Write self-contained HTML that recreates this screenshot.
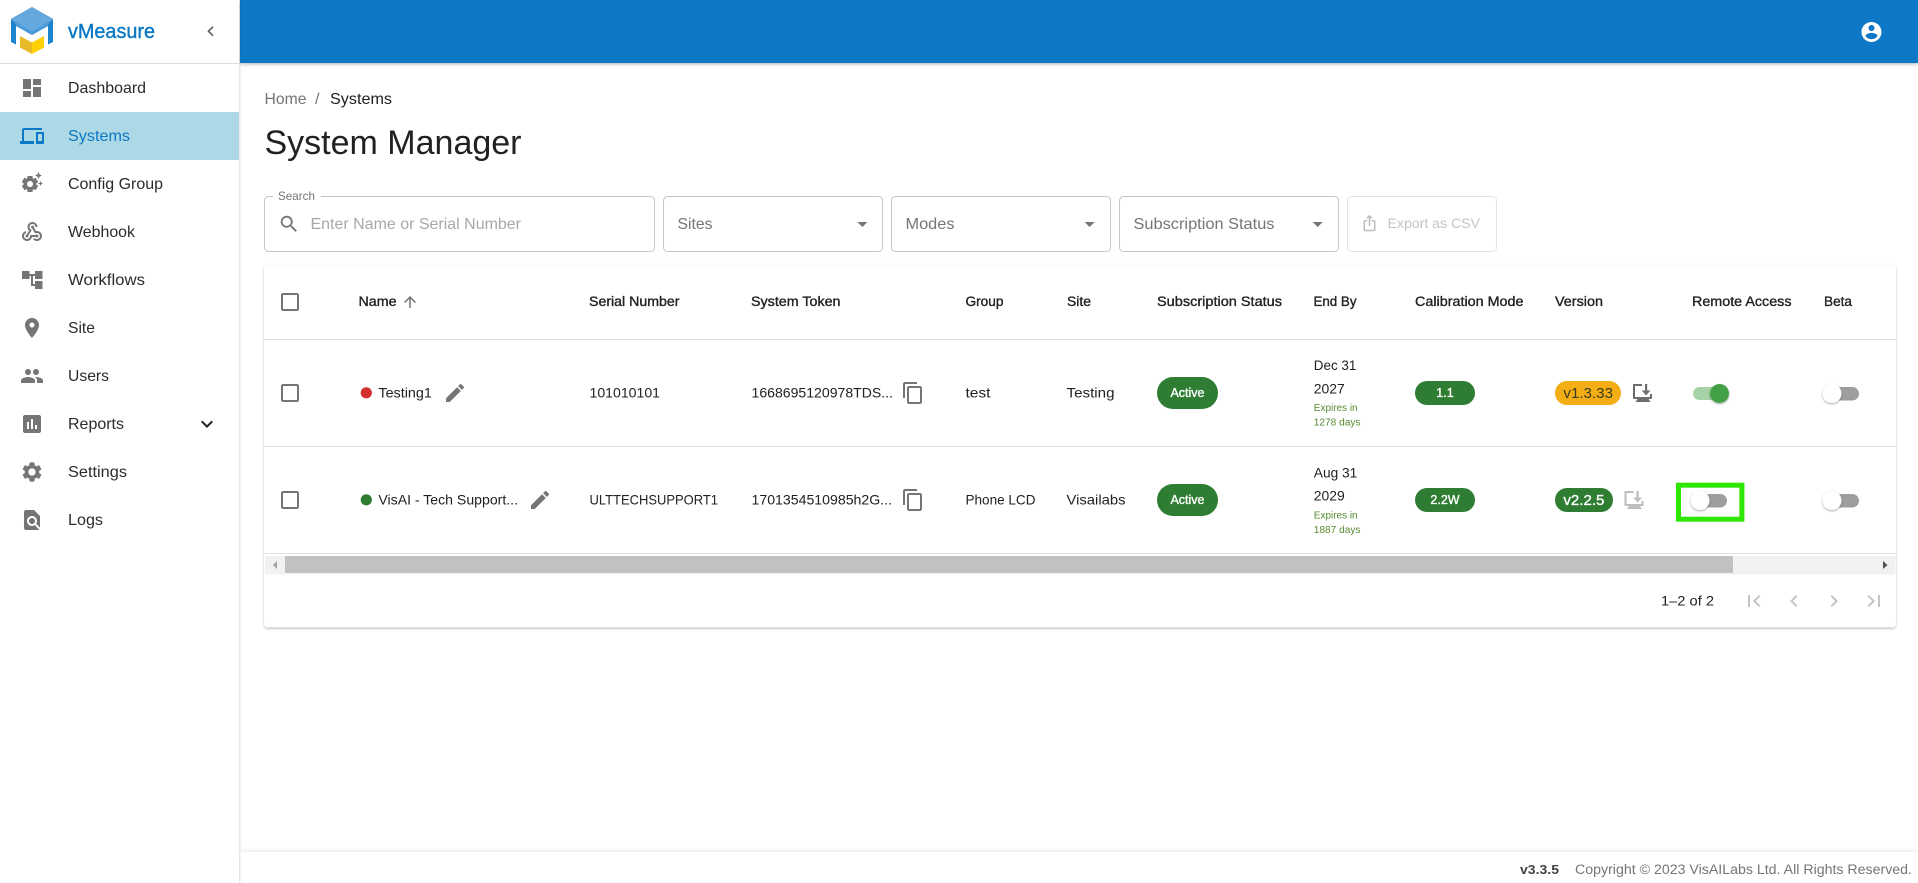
<!DOCTYPE html>
<html lang="en">
<head>
<meta charset="utf-8">
<title>vMeasure - System Manager</title>
<style>
html,body{margin:0;padding:0;background:#fff;width:1918px;height:883px;overflow:hidden}
svg{display:block}
text{font-family:"Liberation Sans",Arial,sans-serif;fill:#212121;font-size:14px}
.nav{font-size:16px;fill:#2b2b2b}
.hd{font-size:13.5px;fill:#222;stroke:#222;stroke-width:.35px}
.ph{font-size:16px;fill:#757575}
.ic{fill:#757575}
.sm{font-size:10px;fill:#558b2f}
.chip{font-size:12.5px;fill:#fff;stroke:#fff;stroke-width:.35px;text-anchor:middle}
.pg{fill:#c4c4c4}
</style>
</head>
<body>
<svg width="1918" height="883" viewBox="0 0 1918 883" xmlns="http://www.w3.org/2000/svg">
<defs>
<filter id="sc" x="-5%" y="-5%" width="110%" height="115%"><feDropShadow dx="0" dy="1.2" stdDeviation="1" flood-color="#000" flood-opacity=".28"/></filter>
<filter id="sh" x="-20%" y="-20%" width="140%" height="160%"><feDropShadow dx="0" dy="1" stdDeviation="1" flood-color="#000" flood-opacity=".35"/></filter>
<filter id="hs" x="-2%" y="-10%" width="104%" height="130%"><feDropShadow dx="0" dy="1.5" stdDeviation="1.5" flood-color="#000" flood-opacity=".25"/></filter>
<filter id="ss" x="-5%" y="-2%" width="120%" height="104%"><feDropShadow dx="1" dy="0" stdDeviation="1" flood-color="#000" flood-opacity=".12"/></filter>
<filter id="fs" x="-2%" y="-40%" width="104%" height="150%"><feDropShadow dx="0" dy="-2" stdDeviation="2" flood-color="#000" flood-opacity=".07"/></filter>
</defs>

<!-- footer -->
<rect x="240" y="852" width="1678" height="31" fill="#fff" filter="url(#fs)"/>
<text x="1520" y="874" textLength="39" lengthAdjust="spacingAndGlyphs" style="font-weight:700;font-size:13px;fill:#424242">v3.3.5</text>
<text x="1575" y="874" textLength="337" lengthAdjust="spacingAndGlyphs" style="font-size:13.5px;fill:#757575">Copyright © 2023 VisAILabs Ltd. All Rights Reserved.</text>

<!-- header -->
<rect x="240" y="0" width="1678" height="63" fill="#0878c5" filter="url(#hs)"/>
<path transform="translate(1859.5,20)" fill="#fff" d="M12 2C6.48 2 2 6.48 2 12s4.48 10 10 10 10-4.48 10-10S17.52 2 12 2zm0 3c1.66 0 3 1.34 3 3s-1.34 3-3 3-3-1.34-3-3 1.34-3 3-3zm0 14.2c-2.5 0-4.71-1.28-6-3.22.03-1.99 4-3.08 6-3.08 1.99 0 5.97 1.09 6 3.08-1.29 1.94-3.5 3.22-6 3.22z"/>

<!-- sidebar -->
<rect x="0" y="0" width="239" height="883" fill="#fff" filter="url(#ss)"/>
<rect x="0" y="63" width="239" height="1" fill="#dedede"/>
<rect x="0" y="112" width="239" height="48" fill="#add8e6"/>
<!-- logo -->
<path d="M11 19 L32 7 L53 19 L53 42 L48 44.5 L48 26 L32 35 L16 26 L16 44.5 L11 42 Z" fill="#1e84cf"/>
<path d="M11 19.5 L32 7 L53 19.5 L32 32 Z" fill="#63a8df"/>
<path d="M14 21.5 L32 32 L50 21.5 L48 26 L32 35 L16 26 Z" fill="#4f9ad8"/>
<path d="M20 36 L32 42.5 L32 54 L20 47.5 Z" fill="#e8ba28"/>
<path d="M44 36 L32 42.5 L32 54 L44 47.5 Z" fill="#ffd005"/>
<text x="68" y="38" textLength="87" lengthAdjust="spacingAndGlyphs" style="font-size:20px;fill:#0a78c4;stroke:#0a78c4;stroke-width:.4px">vMeasure</text>
<path transform="translate(200.5,21) scale(.85)" fill="#616161" d="M15.41 7.41L14 6l-6 6 6 6 1.41-1.41L10.83 12z"/>

<path class="ic" transform="translate(20,76)" d="M3 13h8V3H3v10zm0 8h8v-6H3v6zm10 0h8V11h-8v10zm0-18v6h8V3h-8z"/>
<text class="nav" x="68" y="93" textLength="78" lengthAdjust="spacingAndGlyphs">Dashboard</text>
<path fill="#0a78c4" transform="translate(20,124)" d="M4 6h18V4H4c-1.1 0-2 .9-2 2v11H0v3h14v-3H4V6zm19 2h-6c-.55 0-1 .45-1 1v10c0 .55.45 1 1 1h6c.55 0 1-.45 1-1V9c0-.55-.45-1-1-1zm-1 9h-4v-7h4v7z"/>
<text class="nav" x="68" y="141" textLength="62" lengthAdjust="spacingAndGlyphs" style="fill:#0a78c4">Systems</text>
<path class="ic" transform="translate(20,170)" d="M17.41 6.59 15 5.5l2.41-1.09L18.5 2l1.09 2.41L22 5.5l-2.41 1.09L18.5 9l-1.09-2.41zm3.87 6.13L20.5 11l-.78 1.72-1.72.78 1.72.78.78 1.72.78-1.72L23 13.5l-1.72-.78zm-5.04 1.65 1.94 1.47-2.5 4.33-2.24-.94c-.2.13-.42.26-.64.37l-.3 2.4h-5l-.3-2.41c-.22-.11-.43-.23-.64-.37l-2.24.94-2.5-4.33 1.94-1.47c-.01-.11-.01-.24-.01-.37s0-.26.01-.38l-1.94-1.47 2.5-4.33 2.24.94c.2-.13.42-.26.64-.37L7.5 6h5l.3 2.41c.22.11.43.23.64.37l2.24-.94 2.5 4.33-1.94 1.47c.01.12.01.25.01.37s0 .24-.01.36zM13 14c0-1.66-1.34-3-3-3s-3 1.34-3 3 1.34 3 3 3 3-1.34 3-3z"/>
<text class="nav" x="68" y="189" textLength="95" lengthAdjust="spacingAndGlyphs">Config Group</text>
<path class="ic" transform="translate(20,220)" d="M10 15h5.88c.27-.31.67-.5 1.12-.5.83 0 1.5.67 1.5 1.5s-.67 1.5-1.5 1.5c-.44 0-.84-.19-1.12-.5H11.9c-.46 2.28-2.48 4-4.9 4-2.76 0-5-2.24-5-5 0-2.42 1.72-4.44 4-4.9v2.07c-1.16.41-2 1.53-2 2.83 0 1.65 1.35 3 3 3s3-1.35 3-3v-1zm2.5-11c1.65 0 3 1.35 3 3h2c0-2.76-2.24-5-5-5s-5 2.24-5 5c0 1.43.6 2.71 1.55 3.62l-2.35 3.9c-.68.14-1.2.75-1.2 1.48 0 .83.67 1.5 1.5 1.5s1.5-.67 1.5-1.5c0-.16-.02-.31-.07-.45l3.38-5.63C10.49 9.61 9.5 8.42 9.5 7c0-1.65 1.35-3 3-3zm4.5 9c-.64 0-1.23.2-1.72.54l-3.05-5.07C11.53 8.35 11 7.74 11 7c0-.83.67-1.5 1.5-1.5S14 6.17 14 7c0 .15-.02.29-.06.43l2.19 3.65c.28-.05.57-.08.87-.08 2.76 0 5 2.24 5 5s-2.24 5-5 5c-1.85 0-3.47-1.01-4.33-2.5h2.67c.48.32 1.05.5 1.66.5 1.65 0 3-1.35 3-3s-1.35-3-3-3z"/>
<text class="nav" x="68" y="237" textLength="67" lengthAdjust="spacingAndGlyphs">Webhook</text>
<g class="ic">
<rect x="22" y="271" width="7.5" height="8"/>
<rect x="35" y="271" width="7.5" height="8"/>
<rect x="35" y="281" width="7.5" height="8"/>
<rect x="29" y="274" width="6" height="2"/>
<rect x="31" y="275" width="2" height="11"/>
<rect x="31" y="284" width="4" height="2"/>
</g>
<text class="nav" x="68" y="285" textLength="77" lengthAdjust="spacingAndGlyphs">Workflows</text>
<path class="ic" transform="translate(20,316)" d="M12 2C8.13 2 5 5.13 5 9c0 5.25 7 13 7 13s7-7.75 7-13c0-3.87-3.13-7-7-7zm0 9.5c-1.38 0-2.5-1.12-2.5-2.5s1.12-2.5 2.5-2.5 2.5 1.12 2.5 2.5-1.12 2.5-2.5 2.5z"/>
<text class="nav" x="68" y="333" textLength="27" lengthAdjust="spacingAndGlyphs">Site</text>
<path class="ic" transform="translate(20,364)" d="M16 11c1.66 0 2.99-1.34 2.99-3S17.66 5 16 5c-1.66 0-3 1.34-3 3s1.34 3 3 3zm-8 0c1.66 0 2.99-1.34 2.99-3S9.66 5 8 5C6.34 5 5 6.34 5 8s1.34 3 3 3zm0 2c-2.33 0-7 1.17-7 3.5V19h14v-2.5c0-2.33-4.67-3.5-7-3.5zm8 0c-.29 0-.62.02-.97.05 1.16.84 1.97 1.97 1.97 3.45V19h6v-2.5c0-2.33-4.67-3.5-7-3.5z"/>
<text class="nav" x="68" y="381" textLength="41" lengthAdjust="spacingAndGlyphs">Users</text>
<path class="ic" transform="translate(20,412)" d="M19 3H5c-1.1 0-2 .9-2 2v14c0 1.1.9 2 2 2h14c1.1 0 2-.9 2-2V5c0-1.1-.9-2-2-2zM9 17H7v-7h2v7zm4 0h-2V7h2v10zm4 0h-2v-4h2v4z"/>
<text class="nav" x="68" y="429" textLength="56" lengthAdjust="spacingAndGlyphs">Reports</text>
<path fill="#222" transform="translate(195,412)" d="M16.59 8.59L12 13.17 7.41 8.59 6 10l6 6 6-6z"/>
<path class="ic" transform="translate(20,460)" d="M19.14 12.94c.04-.3.06-.61.06-.94 0-.32-.02-.64-.07-.94l2.03-1.58c.18-.14.23-.41.12-.61l-1.92-3.32c-.12-.22-.37-.29-.59-.22l-2.39.96c-.5-.38-1.03-.7-1.62-.94l-.36-2.54c-.04-.24-.24-.41-.48-.41h-3.84c-.24 0-.43.17-.47.41l-.36 2.54c-.59.24-1.13.57-1.62.94l-2.39-.96c-.22-.08-.47 0-.59.22L2.74 8.87c-.12.21-.08.47.12.61l2.03 1.58c-.05.3-.09.63-.09.94s.02.64.07.94l-2.03 1.58c-.18.14-.23.41-.12.61l1.92 3.32c.12.22.37.29.59.22l2.39-.96c.5.38 1.03.7 1.62.94l.36 2.54c.05.24.24.41.48.41h3.84c.24 0 .44-.17.47-.41l.36-2.54c.59-.24 1.13-.56 1.62-.94l2.39.96c.22.08.47 0 .59-.22l1.92-3.32c.12-.22.07-.47-.12-.61l-2.01-1.58zM12 15.6c-1.98 0-3.6-1.62-3.6-3.6s1.62-3.6 3.6-3.6 3.6 1.62 3.6 3.6-1.62 3.6-3.6 3.6z"/>
<text class="nav" x="68" y="477" textLength="59" lengthAdjust="spacingAndGlyphs">Settings</text>
<path class="ic" transform="translate(20,508)" d="M20 19.59V8l-6-6H6c-1.1 0-1.99.9-1.99 2L4 20c0 1.1.89 2 1.99 2H18c.45 0 .85-.15 1.19-.4l-4.43-4.43c-.8.52-1.74.83-2.76.83-2.76 0-5-2.24-5-5s2.24-5 5-5 5 2.24 5 5c0 1.02-.31 1.96-.83 2.75L20 19.59zM9 13c0 1.66 1.34 3 3 3s3-1.34 3-3-1.34-3-3-3-3 1.34-3 3z"/>
<text class="nav" x="68" y="525" textLength="35" lengthAdjust="spacingAndGlyphs">Logs</text>

<!-- breadcrumb + title -->
<text x="264.5" y="104" textLength="42" lengthAdjust="spacingAndGlyphs" style="font-size:16px;fill:#757575">Home</text>
<text x="315" y="104" style="font-size:16px;fill:#757575">/</text>
<text x="330" y="104" textLength="62" lengthAdjust="spacingAndGlyphs" style="font-size:16px;fill:#212121">Systems</text>
<text x="264.5" y="154" textLength="257" lengthAdjust="spacingAndGlyphs" style="font-size:34px;fill:#212121">System Manager</text>

<!-- filters -->
<rect x="264.5" y="196.5" width="390" height="55" rx="4" fill="#fff" stroke="#c4c4c4"/>
<rect x="273" y="194" width="48" height="5" fill="#fff"/>
<text x="278" y="200" textLength="37" lengthAdjust="spacingAndGlyphs" style="font-size:12px;fill:#757575">Search</text>
<path class="ic" transform="translate(278,213) scale(.92)" d="M15.5 14h-.79l-.28-.27C15.41 12.59 16 11.11 16 9.5 16 5.91 13.09 3 9.5 3S3 5.91 3 9.5 5.91 16 9.5 16c1.61 0 3.09-.59 4.23-1.57l.27.28v.79l5 4.99L20.49 19l-4.99-5zm-6 0C7.01 14 5 11.99 5 9.5S7.01 5 9.5 5 14 7.01 14 9.5 11.99 14 9.5 14z"/>
<text x="310.5" y="229" textLength="210.5" lengthAdjust="spacingAndGlyphs" style="font-size:16px;fill:#a8a8a8">Enter Name or Serial Number</text>

<rect x="663.5" y="196.5" width="219" height="55" rx="4" fill="#fff" stroke="#c4c4c4"/>
<text class="ph" x="677.5" y="229" textLength="35" lengthAdjust="spacingAndGlyphs">Sites</text>
<path class="ic" d="M857.4 222h10l-5 5z"/>
<rect x="891.5" y="196.5" width="219" height="55" rx="4" fill="#fff" stroke="#c4c4c4"/>
<text class="ph" x="905.5" y="229" textLength="49" lengthAdjust="spacingAndGlyphs">Modes</text>
<path class="ic" d="M1084.6 222h10l-5 5z"/>
<rect x="1119.5" y="196.5" width="219" height="55" rx="4" fill="#fff" stroke="#c4c4c4"/>
<text class="ph" x="1133.5" y="229" textLength="141" lengthAdjust="spacingAndGlyphs">Subscription Status</text>
<path class="ic" d="M1312.7 222h10l-5 5z"/>
<rect x="1347.5" y="196.5" width="149" height="55" rx="4" fill="#fff" stroke="#e4e4e4"/>
<path fill="#bdbdbd" transform="translate(1360.5,214) scale(.75)" d="M16 5l-1.42 1.42-1.59-1.59V16h-1.98V4.83L9.42 6.42 8 5l4-4 4 4zm4 5v11c0 1.1-.9 2-2 2H6c-1.11 0-2-.9-2-2V10c0-1.11.89-2 2-2h3v2H6v11h12V10h-3V8h3c1.1 0 2 .89 2 2z"/>
<text x="1387.5" y="228" textLength="92.5" lengthAdjust="spacingAndGlyphs" style="font-size:14px;fill:#c4c4c4">Export as CSV</text>

<!-- table card -->
<rect x="264" y="265" width="1632" height="362.5" rx="4" fill="#fff" filter="url(#sc)"/>
<rect x="264" y="339" width="1632" height="1" fill="#e0e0e0"/>
<rect x="264" y="446" width="1632" height="1" fill="#e0e0e0"/>
<rect x="264" y="553" width="1632" height="1" fill="#e0e0e0"/>

<path class="ic" transform="translate(278,290)" d="M19 5v14H5V5h14m0-2H5c-1.1 0-2 .9-2 2v14c0 1.1.9 2 2 2h14c1.1 0 2-.9 2-2V5c0-1.1-.9-2-2-2z"/>
<text class="hd" x="358.5" y="306" textLength="38" lengthAdjust="spacingAndGlyphs">Name</text>
<path class="ic" transform="translate(401,293) scale(.75)" d="M4 12l1.41 1.41L11 7.83V20h2V7.83l5.58 5.59L20 12l-8-8-8 8z"/>
<text class="hd" x="589" y="306" textLength="90.5" lengthAdjust="spacingAndGlyphs">Serial Number</text>
<text class="hd" x="751" y="306" textLength="89.5" lengthAdjust="spacingAndGlyphs">System Token</text>
<text class="hd" x="965.5" y="306" textLength="38" lengthAdjust="spacingAndGlyphs">Group</text>
<text class="hd" x="1067" y="306" textLength="24" lengthAdjust="spacingAndGlyphs">Site</text>
<text class="hd" x="1157" y="306" textLength="125" lengthAdjust="spacingAndGlyphs">Subscription Status</text>
<text class="hd" x="1313.5" y="306" textLength="43" lengthAdjust="spacingAndGlyphs">End By</text>
<text class="hd" x="1415" y="306" textLength="108.5" lengthAdjust="spacingAndGlyphs">Calibration Mode</text>
<text class="hd" x="1555" y="306" textLength="48" lengthAdjust="spacingAndGlyphs">Version</text>
<text class="hd" x="1692" y="306" textLength="99.5" lengthAdjust="spacingAndGlyphs">Remote Access</text>
<text class="hd" x="1824" y="306" textLength="28" lengthAdjust="spacingAndGlyphs">Beta</text>

<!-- row 1 -->
<path class="ic" transform="translate(278,381)" d="M19 5v14H5V5h14m0-2H5c-1.1 0-2 .9-2 2v14c0 1.1.9 2 2 2h14c1.1 0 2-.9 2-2V5c0-1.1-.9-2-2-2z"/>
<circle cx="366.3" cy="392.8" r="5.6" fill="#d32f2f"/>
<text x="378.4" y="397.5" textLength="53.5" lengthAdjust="spacingAndGlyphs">Testing1</text>
<path class="ic" transform="translate(443,381)" d="M3 17.25V21h3.75L17.81 9.94l-3.75-3.75L3 17.25zM20.71 7.04c.39-.39.39-1.02 0-1.41l-2.34-2.34c-.39-.39-1.02-.39-1.41 0l-1.83 1.83 3.75 3.75 1.83-1.83z"/>
<text x="589.5" y="397.5" textLength="70.5" lengthAdjust="spacingAndGlyphs">101010101</text>
<text x="751.5" y="397.5" textLength="141.5" lengthAdjust="spacingAndGlyphs">1668695120978TDS...</text>
<path class="ic" transform="translate(901,381)" d="M16 1H4c-1.1 0-2 .9-2 2v14h2V3h12V1zm3 4H8c-1.1 0-2 .9-2 2v14c0 1.1.9 2 2 2h11c1.1 0 2-.9 2-2V7c0-1.1-.9-2-2-2zm0 16H8V7h11v14z"/>
<text x="965.5" y="397.5" textLength="25" lengthAdjust="spacingAndGlyphs">test</text>
<text x="1066.5" y="397.5" textLength="48" lengthAdjust="spacingAndGlyphs">Testing</text>
<rect x="1157" y="377" width="61" height="32" rx="16" fill="#2e7d32"/>
<text class="chip" x="1187.5" y="397">Active</text>
<text x="1313.8" y="370" textLength="42.5" lengthAdjust="spacingAndGlyphs">Dec 31</text>
<text x="1313.8" y="393.3" textLength="31" lengthAdjust="spacingAndGlyphs">2027</text>
<text class="sm" x="1313.8" y="411" textLength="43.8" lengthAdjust="spacingAndGlyphs">Expires in</text>
<text class="sm" x="1313.8" y="425.7" textLength="46.7" lengthAdjust="spacingAndGlyphs">1278 days</text>
<rect x="1415" y="381" width="60" height="24" rx="12" fill="#2e7d32"/>
<text class="chip" x="1445" y="397">1.1</text>
<rect x="1555" y="381" width="66" height="24" rx="12" fill="#f2ae14"/>
<text x="1563.4" y="398" textLength="49.6" lengthAdjust="spacingAndGlyphs" style="font-size:15px;fill:#3a3a1e">v1.3.33</text>
<g fill="#6e6e6e">
<path d="M1633 384h9v2h-7v11h15v-3h2v4q0 1-1 1h-17q-1 0-1-1z"/>
<path d="M1645 384h2.2v6.5h3.3l-4.4 5-4.4-5h3.3z"/>
<path d="M1637.5 399h11l2 3h-15z"/>
</g>
<rect x="1693" y="387" width="24" height="13" rx="6.5" fill="#a5d2a7"/>
<circle cx="1719.5" cy="393.5" r="9.5" fill="#43a047" filter="url(#sh)"/>
<rect x="1832" y="387" width="27" height="13.5" rx="6.7" fill="#9e9e9e"/>
<circle cx="1832" cy="393.5" r="9.5" fill="#fff" filter="url(#sh)"/>

<!-- row 2 -->
<path class="ic" transform="translate(278,488)" d="M19 5v14H5V5h14m0-2H5c-1.1 0-2 .9-2 2v14c0 1.1.9 2 2 2h14c1.1 0 2-.9 2-2V5c0-1.1-.9-2-2-2z"/>
<circle cx="366.3" cy="499.8" r="5.6" fill="#2e7d32"/>
<text x="378.4" y="504.5" textLength="139.6" lengthAdjust="spacingAndGlyphs">VisAI - Tech Support...</text>
<path class="ic" transform="translate(528,488)" d="M3 17.25V21h3.75L17.81 9.94l-3.75-3.75L3 17.25zM20.71 7.04c.39-.39.39-1.02 0-1.41l-2.34-2.34c-.39-.39-1.02-.39-1.41 0l-1.83 1.83 3.75 3.75 1.83-1.83z"/>
<text x="589.5" y="504.5" textLength="128.5" lengthAdjust="spacingAndGlyphs">ULTTECHSUPPORT1</text>
<text x="751.5" y="504.5" textLength="140.5" lengthAdjust="spacingAndGlyphs">1701354510985h2G...</text>
<path class="ic" transform="translate(901,488)" d="M16 1H4c-1.1 0-2 .9-2 2v14h2V3h12V1zm3 4H8c-1.1 0-2 .9-2 2v14c0 1.1.9 2 2 2h11c1.1 0 2-.9 2-2V7c0-1.1-.9-2-2-2zm0 16H8V7h11v14z"/>
<text x="965.5" y="504.5" textLength="70" lengthAdjust="spacingAndGlyphs">Phone LCD</text>
<text x="1066.5" y="504.5" textLength="59" lengthAdjust="spacingAndGlyphs">Visailabs</text>
<rect x="1157" y="484" width="61" height="32" rx="16" fill="#2e7d32"/>
<text class="chip" x="1187.5" y="504">Active</text>
<text x="1313.8" y="477.3" textLength="43.5" lengthAdjust="spacingAndGlyphs">Aug 31</text>
<text x="1313.8" y="500.7" textLength="31" lengthAdjust="spacingAndGlyphs">2029</text>
<text class="sm" x="1313.8" y="518.5" textLength="43.8" lengthAdjust="spacingAndGlyphs">Expires in</text>
<text class="sm" x="1313.8" y="533" textLength="46.7" lengthAdjust="spacingAndGlyphs">1887 days</text>
<rect x="1415" y="488" width="60" height="24" rx="12" fill="#2e7d32"/>
<text class="chip" x="1445" y="504">2.2W</text>
<rect x="1555" y="488" width="58" height="24" rx="12" fill="#2e7d32"/>
<text x="1563.4" y="505" textLength="41" lengthAdjust="spacingAndGlyphs" style="font-size:15px;fill:#fff;stroke:#fff;stroke-width:.35px">v2.2.5</text>
<g fill="#bdbdbd">
<path d="M1624.5 491h9v2h-7v11h15v-3h2v4q0 1-1 1h-17q-1 0-1-1z"/>
<path d="M1636.5 491h2.2v6.5h3.3l-4.4 5-4.4-5h3.3z"/>
<path d="M1629 506h11l2 3h-15z"/>
</g>
<rect x="1700" y="494" width="27" height="13.5" rx="6.7" fill="#9e9e9e"/>
<circle cx="1700" cy="500.5" r="9.5" fill="#fff" filter="url(#sh)"/>
<rect x="1678.5" y="485.2" width="63.4" height="34" fill="none" stroke="#2ee600" stroke-width="5"/>
<rect x="1832" y="494" width="27" height="13.5" rx="6.7" fill="#9e9e9e"/>
<circle cx="1832" cy="500.5" r="9.5" fill="#fff" filter="url(#sh)"/>

<!-- scrollbar -->
<rect x="265" y="556" width="1630.5" height="18.5" fill="#f1f1f1"/>
<rect x="285" y="556" width="1448" height="17" fill="#c1c1c1"/>
<path d="M277 561v8l-4-4z" fill="#a3a3a3"/>
<path d="M1883 561v8l4.5-4z" fill="#505050"/>

<!-- pagination -->
<text x="1661" y="605.3" textLength="53" lengthAdjust="spacingAndGlyphs">1–2 of 2</text>
<path class="pg" transform="translate(1742,589)" d="M18.41 16.59L13.82 12l4.59-4.59L17 6l-6 6 6 6zM6 6h2v12H6z"/>
<path class="pg" transform="translate(1782,589)" d="M15.41 7.41L14 6l-6 6 6 6 1.41-1.41L10.83 12z"/>
<path class="pg" transform="translate(1822,589)" d="M10 6L8.59 7.41 13.17 12l-4.58 4.59L10 18l6-6z"/>
<path class="pg" transform="translate(1862,589)" d="M5.59 7.41L10.18 12l-4.59 4.59L7 18l6-6-6-6zM16 6h2v12h-2z"/>
</svg>
</body>
</html>
